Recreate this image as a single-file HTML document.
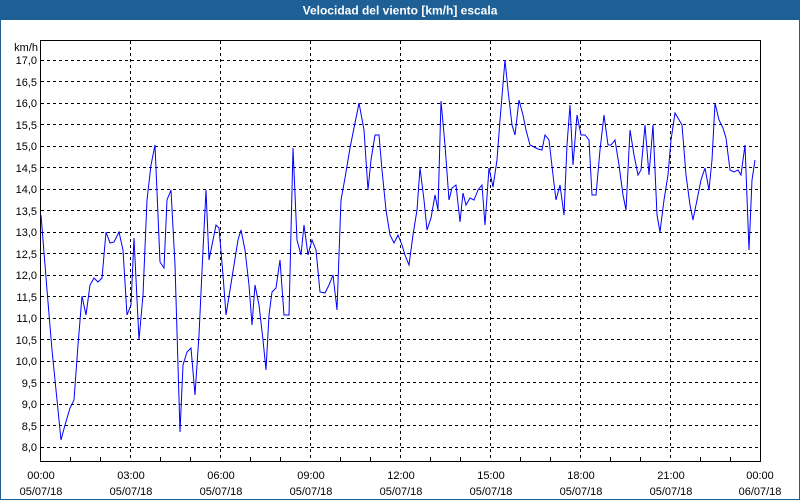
<!DOCTYPE html>
<html><head><meta charset="utf-8"><style>
html,body{margin:0;padding:0;}
body{width:800px;height:500px;overflow:hidden;background:#fff;font-family:"Liberation Sans",sans-serif;}
</style></head><body>
<svg width="800" height="500" xmlns="http://www.w3.org/2000/svg" style="display:block">
<rect x="0" y="0" width="800" height="500" fill="#fff"/>
<rect x="0" y="0" width="800" height="20" fill="#1e5f96"/>
<rect x="0" y="0" width="1" height="500" fill="#1e5f96"/>
<rect x="799" y="0" width="1" height="500" fill="#1e5f96"/>
<rect x="0" y="499" width="800" height="1" fill="#1e5f96"/>
<text x="400" y="14.5" fill="#fff" font-size="12" font-weight="bold" text-anchor="middle" font-family="Liberation Sans, sans-serif">Velocidad del viento [km/h] escala</text>
<g stroke="#000" stroke-width="1" stroke-dasharray="3,3" shape-rendering="crispEdges">
<line x1="41" x2="760" y1="60.5" y2="60.5"/><line x1="41" x2="760" y1="81.5" y2="81.5"/><line x1="41" x2="760" y1="103.5" y2="103.5"/><line x1="41" x2="760" y1="124.5" y2="124.5"/><line x1="41" x2="760" y1="146.5" y2="146.5"/><line x1="41" x2="760" y1="167.5" y2="167.5"/><line x1="41" x2="760" y1="189.5" y2="189.5"/><line x1="41" x2="760" y1="210.5" y2="210.5"/><line x1="41" x2="760" y1="232.5" y2="232.5"/><line x1="41" x2="760" y1="253.5" y2="253.5"/><line x1="41" x2="760" y1="275.5" y2="275.5"/><line x1="41" x2="760" y1="296.5" y2="296.5"/><line x1="41" x2="760" y1="318.5" y2="318.5"/><line x1="41" x2="760" y1="339.5" y2="339.5"/><line x1="41" x2="760" y1="361.5" y2="361.5"/><line x1="41" x2="760" y1="382.5" y2="382.5"/><line x1="41" x2="760" y1="404.5" y2="404.5"/><line x1="41" x2="760" y1="425.5" y2="425.5"/><line x1="41" x2="760" y1="447.5" y2="447.5"/>
<line x1="130.5" x2="130.5" y1="41" y2="461"/><line x1="220.5" x2="220.5" y1="41" y2="461"/><line x1="310.5" x2="310.5" y1="41" y2="461"/><line x1="400.5" x2="400.5" y1="41" y2="461"/><line x1="490.5" x2="490.5" y1="41" y2="461"/><line x1="580.5" x2="580.5" y1="41" y2="461"/><line x1="670.5" x2="670.5" y1="41" y2="461"/>
</g>
<rect x="40.5" y="40.5" width="720" height="421" fill="none" stroke="#000" stroke-width="1" shape-rendering="crispEdges"/>
<g stroke="#000" shape-rendering="crispEdges">
<line x1="70.5" x2="70.5" y1="457" y2="461"/><line x1="100.5" x2="100.5" y1="457" y2="461"/><line x1="160.5" x2="160.5" y1="457" y2="461"/><line x1="190.5" x2="190.5" y1="457" y2="461"/><line x1="250.5" x2="250.5" y1="457" y2="461"/><line x1="280.5" x2="280.5" y1="457" y2="461"/><line x1="340.5" x2="340.5" y1="457" y2="461"/><line x1="370.5" x2="370.5" y1="457" y2="461"/><line x1="430.5" x2="430.5" y1="457" y2="461"/><line x1="460.5" x2="460.5" y1="457" y2="461"/><line x1="520.5" x2="520.5" y1="457" y2="461"/><line x1="550.5" x2="550.5" y1="457" y2="461"/><line x1="610.5" x2="610.5" y1="457" y2="461"/><line x1="640.5" x2="640.5" y1="457" y2="461"/><line x1="700.5" x2="700.5" y1="457" y2="461"/><line x1="730.5" x2="730.5" y1="457" y2="461"/>
</g>
<g font-size="11" fill="#000" text-anchor="end" font-family="Liberation Sans, sans-serif">
<text x="38" y="51">km/h</text>
<text x="37" y="64">17,0</text><text x="37" y="86">16,5</text><text x="37" y="107">16,0</text><text x="37" y="129">15,5</text><text x="37" y="150">15,0</text><text x="37" y="172">14,5</text><text x="37" y="193">14,0</text><text x="37" y="215">13,5</text><text x="37" y="236">13,0</text><text x="37" y="258">12,5</text><text x="37" y="279">12,0</text><text x="37" y="301">11,5</text><text x="37" y="322">11,0</text><text x="37" y="344">10,5</text><text x="37" y="365">10,0</text><text x="37" y="387">9,5</text><text x="37" y="408">9,0</text><text x="37" y="430">8,5</text><text x="37" y="451">8,0</text>
</g>
<g font-size="11" fill="#000" text-anchor="middle" font-family="Liberation Sans, sans-serif">
<text x="41" y="479">00:00</text><text x="41" y="495">05/07/18</text>
<text x="131" y="479">03:00</text><text x="131" y="495">05/07/18</text>
<text x="221" y="479">06:00</text><text x="221" y="495">05/07/18</text>
<text x="311" y="479">09:00</text><text x="311" y="495">05/07/18</text>
<text x="401" y="479">12:00</text><text x="401" y="495">05/07/18</text>
<text x="491" y="479">15:00</text><text x="491" y="495">05/07/18</text>
<text x="581" y="479">18:00</text><text x="581" y="495">05/07/18</text>
<text x="671" y="479">21:00</text><text x="671" y="495">05/07/18</text>
<text x="760" y="479">00:00</text><text x="760" y="495">06/07/18</text>
</g>
<polyline fill="none" stroke="#0000ff" stroke-width="1" points="41,215 47,290 52,350 57,400 61,440 65,425 70,408 74,400 78,345 82,296 86,315 90,285 94,278 98,282 102,278 106,232 110,243 114,242 119,232 123,250 127,315 131,305 134,238 139,340 143,295 147,200 151,165 155,145 160,262 164,268 167,200 171,190 175,265 180,432 183,365 187,352 191,348 195,395 199,335 203,250 206,190 209,260 213,240 216,225 219,228 223,275 226,315 230,290 234,265 238,240 241,230 245,250 249,285 252,325 255,285 259,305 263,340 266,370 269,315 272,292 276,288 280,260 284,315 289,315 293,148 297,240 301,255 304,225 308,255 312,240 316,250 320,292 325,293 329,285 333,275 337,310 341,200 345,178 350,148 354,128 359,103 364,130 368,190 371,160 375,135 379,135 382,170 386,210 390,235 394,243 398,235 402,245 405,255 409,265 413,235 417,210 420,168 424,200 427,230 431,218 435,195 438,210 441,101 445,145 449,200 452,188 456,185 460,222 463,193 466,205 470,198 474,200 478,190 482,185 485,225 489,168 493,187 497,160 500,120 505,60 508,90 512,125 515,135 519,100 523,115 526,130 530,145 534,147 538,149 542,150 545,135 549,140 553,175 556,200 560,185 564,215 567,145 570,105 573,165 577,115 581,135 585,135 589,140 592,195 596,195 600,150 604,115 608,145 611,145 615,140 619,165 623,195 626,210 630,130 634,155 638,175 641,170 645,125 649,175 653,125 657,215 660,232 664,200 668,175 671,140 675,113 678,118 682,125 686,175 690,205 693,220 697,200 701,180 705,168 709,190 712,160 715,103 719,120 723,128 726,138 730,170 734,172 738,170 741,175 745,145 749,250 752,180 755,160"/>
</svg>
</body></html>
